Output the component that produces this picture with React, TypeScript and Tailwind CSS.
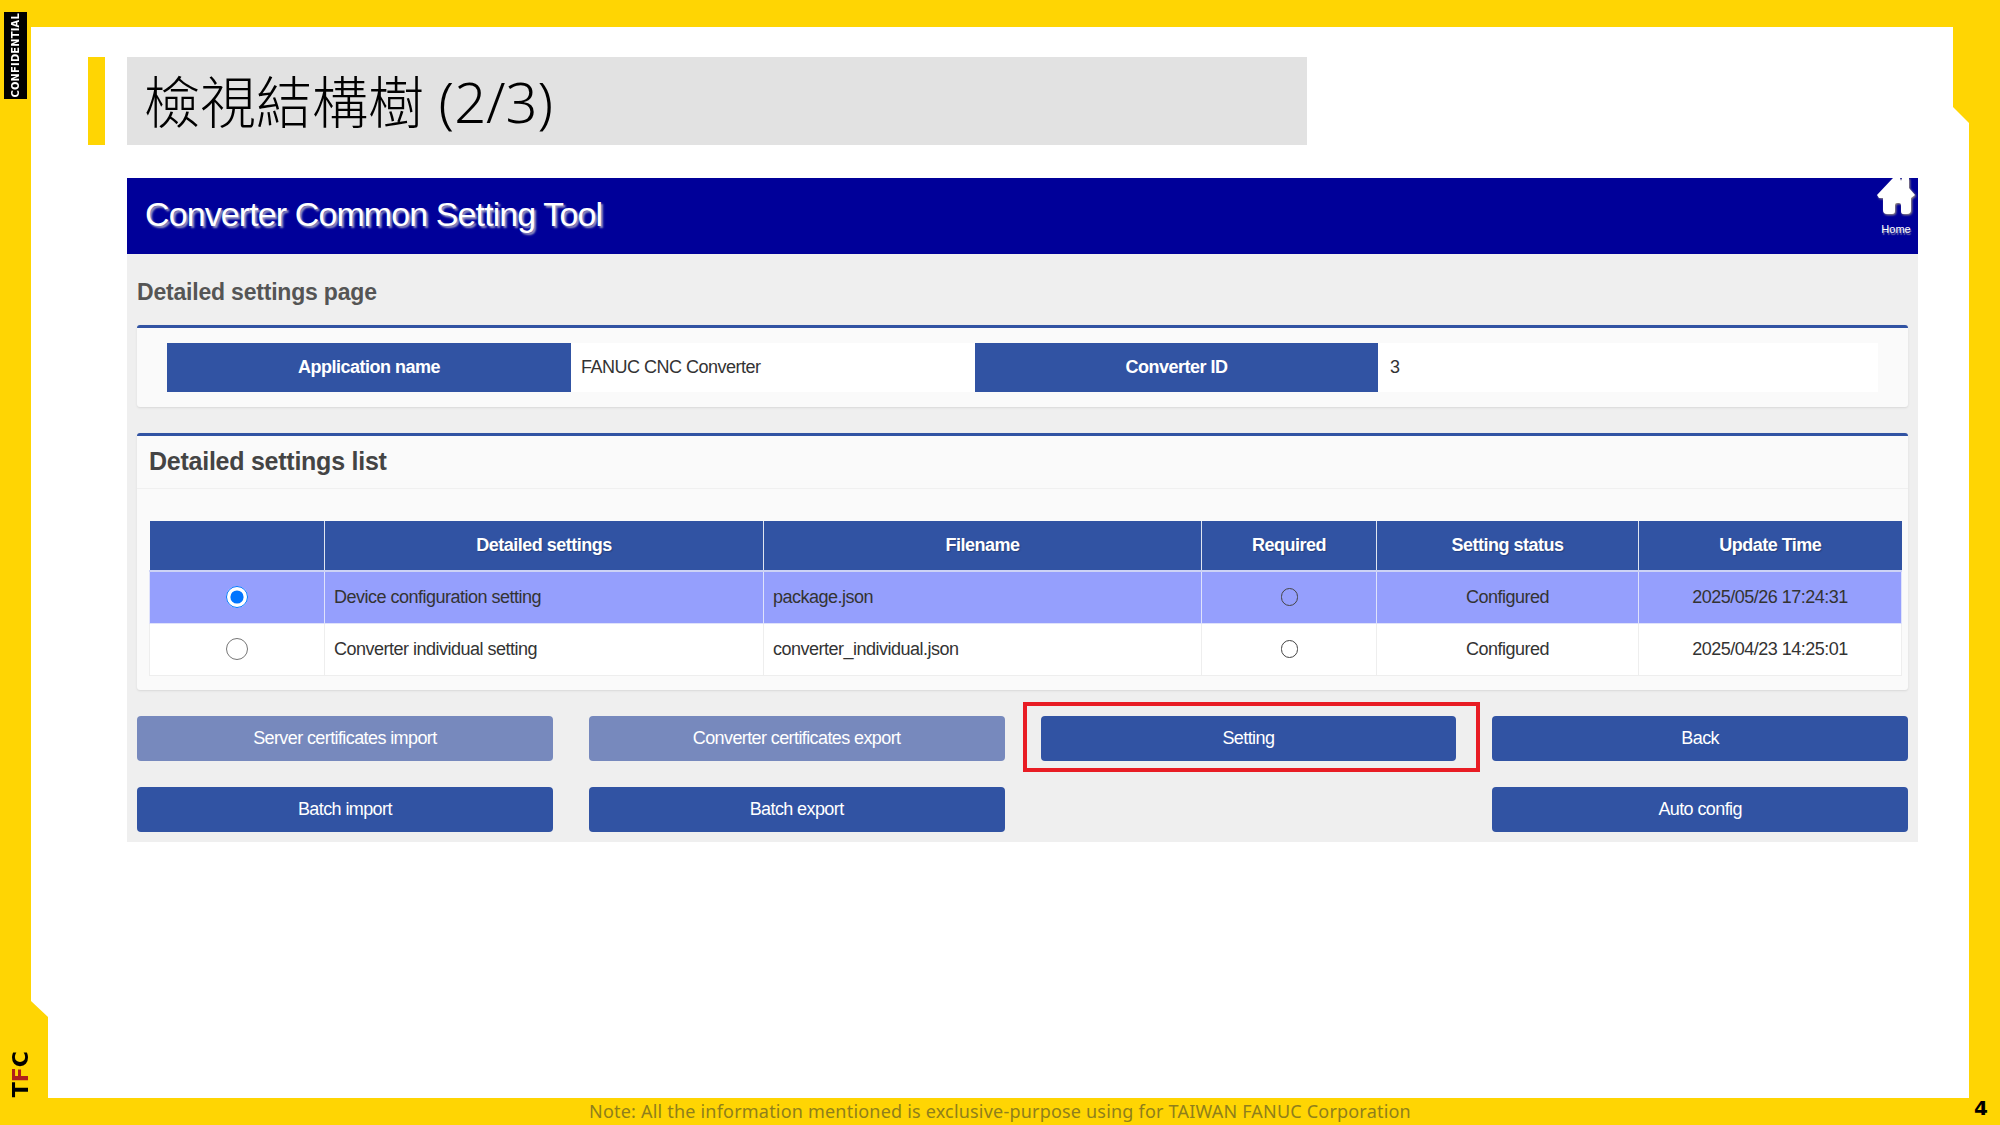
import React from "react";

const rows = [
  { name: "Device configuration setting", file: "package.json", time: "2025/05/26 17:24:31", selected: true },
  { name: "Converter individual setting", file: "converter_individual.json", time: "2025/04/23 14:25:01", selected: false },
];

const columns = ["", "Detailed settings", "Filename", "Required", "Setting status", "Update Time"];

function ActionButton({ label, muted }: { label: string; muted?: boolean }) {
  return (
    <button className={`h-[45px] w-full rounded-[4px] text-white text-[18px] tracking-[-0.6px] ${muted ? "bg-[#7789bd]" : "bg-[#3153a3]"}`}>
      {label}
    </button>
  );
}

function HomeIcon() {
  return (
    <svg width="38" height="36" viewBox="0 0 38 36" className="drop-shadow-[1px_1px_1px_#a89c80]">
      <path
        fill="#fff"
        d="M0 17 L16 0 H23 L24 3 L25 0 H32 V10 L38 17 L34 20 V32 Q34 36 30 36 H26 Q24 36 24 33 V27 Q24 25 22 25 H20 Q18 25 18 27 V33 Q18 36 15 36 H10 Q6 36 6 32 V20 L2 20 Z"
      />
    </svg>
  );
}

export default function App() {
  return (
    <div className="w-[2000px] h-[1125px] bg-[#ffd503] flex overflow-hidden font-['Liberation_Sans',sans-serif]">
      {/* left rail */}
      <div className="w-[31px] h-full flex flex-col justify-between pt-[12px] pb-[28px]">
        <div className="ml-[4px] w-[23px] h-[87px] bg-black flex items-center justify-center">
          <span className="[writing-mode:vertical-rl] rotate-180 text-white text-[11px] font-bold leading-none tracking-[0.2px] font-['DejaVu_Sans_Condensed','DejaVu_Sans',sans-serif]">
            CONFIDENTIAL
          </span>
        </div>
        <div className="ml-[12px] [writing-mode:vertical-rl] rotate-180 text-[22px] font-bold leading-[18px] text-black font-['DejaVu_Sans',sans-serif]">
          T<span className="text-[#b0201a]">F</span>C
        </div>
      </div>

      {/* slide */}
      <div className="w-[1938px] h-full flex flex-col">
        <div className="h-[27px] shrink-0" />
        <div className="flex-1 bg-white [clip-path:polygon(0_0,1922px_0,1922px_80px,1938px_96px,1938px_1071px,17px_1071px,17px_990px,0_974px)]">
          <div className="flex gap-[22px] mt-[30px] ml-[57px]">
            <div className="w-[17px] h-[88px] bg-[#ffd503]" />
            <div className="w-[1180px] h-[88px] bg-[#e2e2e2] flex items-center pl-[17px] text-[56px] text-black font-['Noto_Sans','Noto_Sans_CJK_TC',sans-serif] font-light">
              檢視結構樹 (2/3)
            </div>
          </div>

          <div className="mt-[33px] ml-[96px] w-[1791px] h-[664px] bg-[#efefef] flex flex-col">
            {/* app header */}
            <div className="h-[76px] shrink-0 bg-[#000099] flex justify-between items-start overflow-hidden pl-[18px] pr-[3px]">
              <div className="mt-[16px] text-[34px] leading-[40px] tracking-[-0.9px] text-white [text-shadow:2px_2px_2px_#9a9ac0]">
                Converter Common Setting Tool
              </div>
              <div className="flex flex-col items-center">
                <HomeIcon />
                <span className="mt-[9px] text-[11px] leading-[12px] text-white [text-shadow:1px_2px_1px_#8888aa]">Home</span>
              </div>
            </div>

            <div className="px-[10px] flex flex-col">
              <h2 className="mt-[24px] h-[28px] leading-[28px] text-[23px] font-bold tracking-[-0.2px] text-[#555]">
                Detailed settings page
              </h2>

              {/* application info */}
              <div className="mt-[19px] h-[82px] bg-[#fafafa] border-t-[3px] border-[#3153a3] rounded-[3px] shadow-[0_1px_2px_#d8d8d8] pt-[15px] px-[30px]">
                <div className="grid grid-cols-[404px_404px_403px_506px] h-[49px] bg-white text-[18px] tracking-[-0.5px] items-center">
                  <div className="h-full bg-[#3153a3] text-white font-bold flex items-center justify-center">Application name</div>
                  <div className="pl-[10px] text-[#333]">FANUC CNC Converter</div>
                  <div className="h-full bg-[#3153a3] text-white font-bold flex items-center justify-center">Converter ID</div>
                  <div className="pl-[12px] text-[#333]">3</div>
                </div>
              </div>

              {/* settings list */}
              <div className="mt-[26px] h-[257px] bg-[#fafafa] border-t-[3px] border-[#3153a3] rounded-[3px] shadow-[0_1px_2px_#d8d8d8]">
                <div className="h-[53px] border-b border-[#f0f0f0] pl-[12px] flex items-center text-[25px] font-bold tracking-[-0.25px] text-[#444]">
                  Detailed settings list
                </div>
                <table className="mt-[32px] ml-[12px] w-[1752px] table-fixed border-collapse text-[18px] tracking-[-0.5px]">
                  <colgroup>
                    <col className="w-[175px]" />
                    <col className="w-[439px]" />
                    <col className="w-[438px]" />
                    <col className="w-[175px]" />
                    <col className="w-[262px]" />
                    <col className="w-[263px]" />
                  </colgroup>
                  <thead>
                    <tr className="h-[50px] bg-[#3153a3] text-white font-bold">
                      {columns.map((c, i) => (
                        <th key={i} className="border-x border-[#dfe5f0] first:border-l-0 last:border-r-0 [text-shadow:1px_1px_1px_#26407e]">{c}</th>
                      ))}
                    </tr>
                  </thead>
                  <tbody>
                    {rows.map((r) => (
                      <tr key={r.name} className={`h-[52px] text-[#333] ${r.selected ? "bg-[#959ffd] border-t-2 border-[#cdd3f5]" : "bg-white"}`}>
                        <td className={`border ${r.selected ? "border-[#dfe2fb]" : "border-[#eeeeee]"}`}>
                          <div className="flex justify-center">
                            <input type="radio" checked={r.selected} readOnly className="w-[22px] h-[22px] m-0" />
                          </div>
                        </td>
                        <td className={`border pl-[9px] ${r.selected ? "border-[#dfe2fb]" : "border-[#eeeeee]"}`}>{r.name}</td>
                        <td className={`border pl-[9px] ${r.selected ? "border-[#dfe2fb]" : "border-[#eeeeee]"}`}>{r.file}</td>
                        <td className={`border ${r.selected ? "border-[#dfe2fb]" : "border-[#eeeeee]"}`}>
                          <div className="flex justify-center">
                            <span className="w-[17px] h-[18px] rounded-full border-[1.5px] border-[#444]" />
                          </div>
                        </td>
                        <td className={`border text-center ${r.selected ? "border-[#dfe2fb]" : "border-[#eeeeee]"}`}>Configured</td>
                        <td className={`border text-center ${r.selected ? "border-[#dfe2fb]" : "border-[#eeeeee]"}`}>{r.time}</td>
                      </tr>
                    ))}
                  </tbody>
                </table>
              </div>

              {/* actions */}
              <div className="mt-[26px] grid grid-cols-4 gap-x-[36px] gap-y-[26px]">
                <ActionButton label="Server certificates import" muted />
                <ActionButton label="Converter certificates export" muted />
                <div className="relative">
                  <ActionButton label="Setting" />
                  <div className="absolute -left-[18px] -right-[24px] -top-[14px] -bottom-[11px] border-[4px] border-[#e81c24]" />
                </div>
                <ActionButton label="Back" />
                <ActionButton label="Batch import" />
                <ActionButton label="Batch export" />
                <div />
                <ActionButton label="Auto config" />
              </div>
            </div>
          </div>
        </div>
        <div className="h-[27px] shrink-0 flex items-center justify-center text-[18px] tracking-[0.2px] text-[#8f7f1c] font-['Noto_Sans',sans-serif]">
          Note: All the information mentioned is exclusive-purpose using for TAIWAN FANUC Corporation
        </div>
      </div>

      {/* right rail */}
      <div className="w-[31px] h-full flex flex-col justify-end">
        <div className="h-[27px] pl-[5px] text-[20px] leading-[20px] font-bold text-black font-['DejaVu_Sans',sans-serif]">4</div>
      </div>
    </div>
  );
}
